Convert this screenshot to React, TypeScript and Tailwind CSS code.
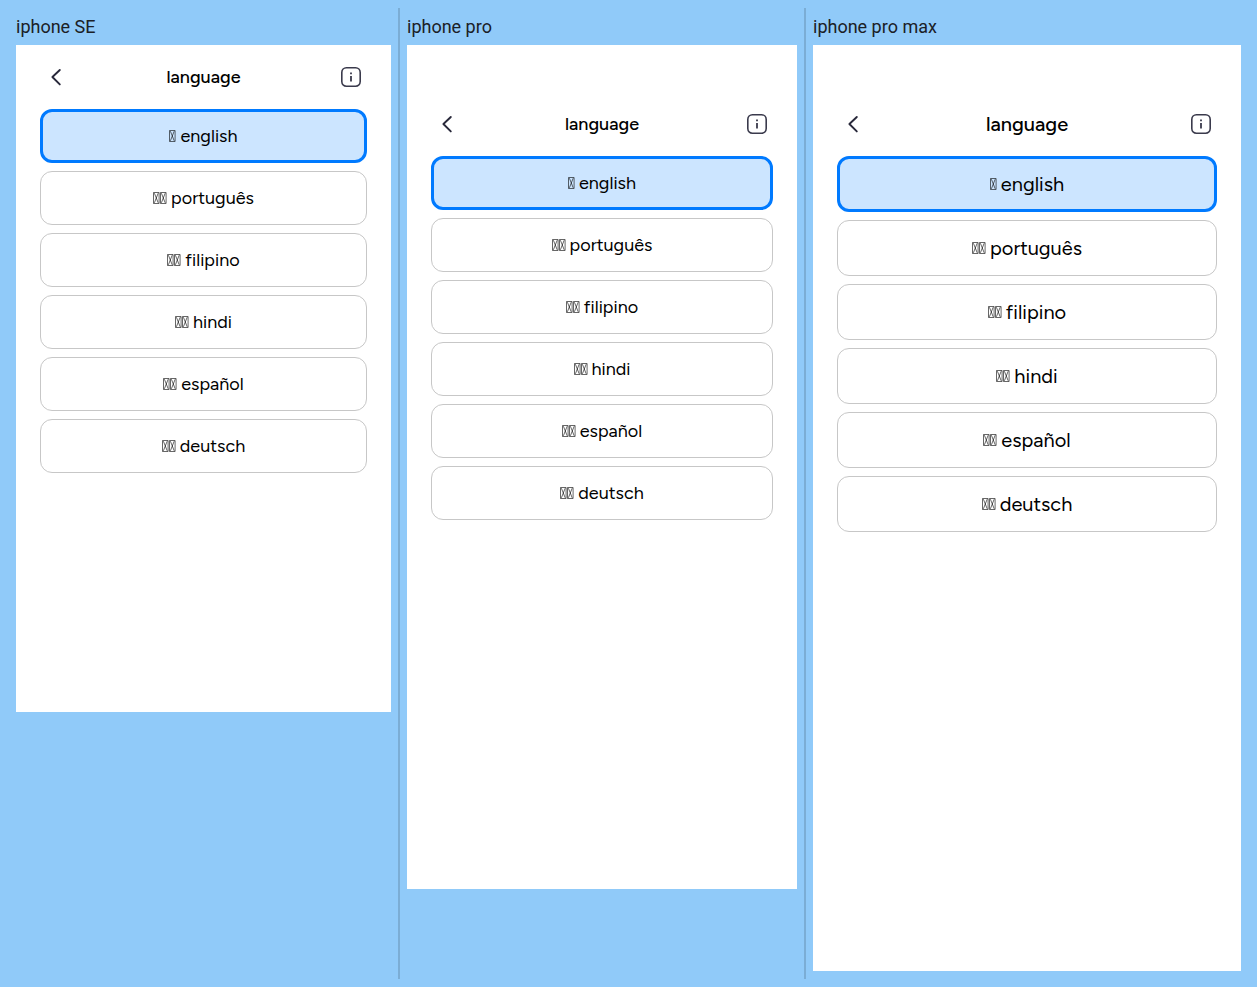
import { useState } from "react";
import clsx from "clsx";

type Language = { name: string; glyphs: number };

const languages: Language[] = [
  { name: "english", glyphs: 1 },
  { name: "português", glyphs: 2 },
  { name: "filipino", glyphs: 2 },
  { name: "hindi", glyphs: 2 },
  { name: "español", glyphs: 2 },
  { name: "deutsch", glyphs: 2 },
];

function FlagGlyph() {
  return (
    <svg width="7" height="12" viewBox="0 0 7 12" fill="none" stroke="#000" strokeWidth="0.6" aria-hidden="true">
      <path d="M.5.5h5.6v11H.5zM1.4 1.2l3.8 9.6M5.2 1.2l-3.8 9.6" />
    </svg>
  );
}

function BackIcon() {
  return (
    <svg width="32" height="32" viewBox="0 0 32 32" fill="none" stroke="#28283a" strokeWidth="1.9" strokeLinecap="round" strokeLinejoin="round" aria-hidden="true">
      <path d="M19.8 9 12.4 16l7.4 7.4" />
    </svg>
  );
}

function InfoIcon() {
  return (
    <svg width="32" height="32" viewBox="0 0 32 32" fill="none" stroke="#3a3a4c" strokeWidth="1.6" aria-hidden="true">
      <rect x="6.8" y="6.8" width="18.4" height="18.4" rx="4.6" />
      <path d="M16 15v5.6M16 11.4v1.9" strokeWidth="1.8" />
    </svg>
  );
}

type PhoneProps = { label: string; frame: string; large?: boolean };

function Phone({ label, frame, large }: PhoneProps) {
  const [selected, setSelected] = useState("english");
  return (
    <section className="pt-2">
      <h2 className="mb-2 font-[Roboto,sans-serif] text-[18px] leading-[21px] text-[#1b2026]">{label}</h2>
      <div className={clsx("bg-white px-6 font-[Figtree,Lato,sans-serif] text-black", frame, large ? "text-[20px]" : "text-[18px]")}>
        <header className="mb-4 flex items-center justify-between">
          <button type="button" aria-label="Back">
            <BackIcon />
          </button>
          <h1 className="font-medium leading-6">language</h1>
          <button type="button" aria-label="Information">
            <InfoIcon />
          </button>
        </header>
        <div className="flex flex-col gap-2">
          {languages.map(({ name, glyphs }) => (
            <button
              key={name}
              type="button"
              aria-pressed={selected === name}
              onClick={() => setSelected(name)}
              className={clsx(
                "flex items-center justify-center gap-1 rounded-xl leading-6",
                large ? "h-14" : "h-[54px]",
                selected === name ? "border-3 border-[#007aff] bg-[#cce5ff]" : "border border-[#c7c7c7] bg-white",
              )}
            >
              <span className="flex">
                {Array.from({ length: glyphs }, (_, i) => (
                  <FlagGlyph key={i} />
                ))}
              </span>
              <span>{name}</span>
            </button>
          ))}
        </div>
      </div>
    </section>
  );
}

export default function App() {
  return (
    <main className="grid min-h-screen grid-cols-[375fr_2px_390fr_2px_428fr] gap-x-[7px] bg-[#90caf9] px-4 py-2">
      <Phone label="iphone SE" frame="aspect-[375/667] pt-4" />
      <div className="bg-[#7badd5]" />
      <Phone label="iphone pro" frame="aspect-[390/844] pt-[63px]" />
      <div className="bg-[#7badd5]" />
      <Phone label="iphone pro max" frame="aspect-[428/926] pt-[63px]" large />
    </main>
  );
}
